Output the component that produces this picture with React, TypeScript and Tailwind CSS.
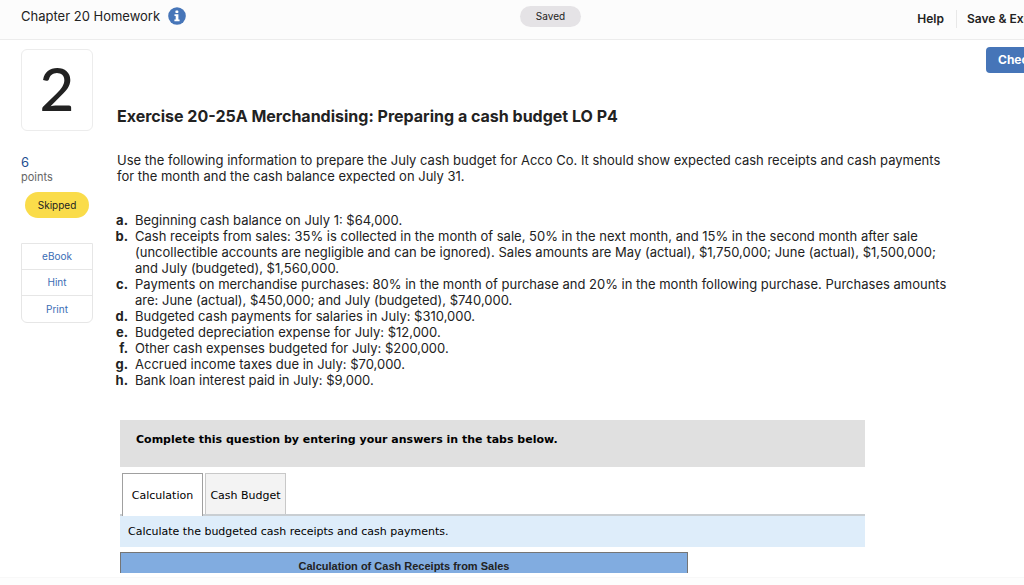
import React, { useState } from "react";

interface IListItem {
  letter: string;
  text: string;
}

const items: IListItem[] = [
  { letter: "a.", text: "Beginning cash balance on July 1: $64,000." },
  {
    letter: "b.",
    text: "Cash receipts from sales: 35% is collected in the month of sale, 50% in the next month, and 15% in the second month after sale (uncollectible accounts are negligible and can be ignored). Sales amounts are May (actual), $1,750,000; June (actual), $1,500,000; and July (budgeted), $1,560,000.",
  },
  {
    letter: "c.",
    text: "Payments on merchandise purchases: 80% in the month of purchase and 20% in the month following purchase. Purchases amounts are: June (actual), $450,000; and July (budgeted), $740,000.",
  },
  { letter: "d.", text: "Budgeted cash payments for salaries in July: $310,000." },
  { letter: "e.", text: "Budgeted depreciation expense for July: $12,000." },
  { letter: "f.", text: "Other cash expenses budgeted for July: $200,000." },
  { letter: "g.", text: "Accrued income taxes due in July: $70,000." },
  { letter: "h.", text: "Bank loan interest paid in July: $9,000." },
];

const tabs = ["Calculation", "Cash Budget"];
const resources = ["eBook", "Hint", "Print"];

const InfoIcon: React.FC = () => (
  <svg viewBox="0 0 18 18" className="h-[18px] w-[18px]" aria-hidden="true">
    <circle cx="9" cy="9" r="8.8" fill="#4675b8" />
    <rect x="7.5" y="3.6" width="2.8" height="2.4" rx="0.6" fill="#fff" />
    <path d="M6.5 7.2h3.9v5.3h1.2v1.7H6.4v-1.7h1.3V8.9H6.5z" fill="#fff" />
  </svg>
);

const Header: React.FC = () => (
  <header className="grid h-10 shrink-0 grid-cols-[520fr_61fr_443fr] overflow-hidden border-b border-[#ececec] bg-[#fcfcfc]">
    <div className="flex items-center gap-2 pb-2 pl-[21px]">
      <h1 className="text-[13px] leading-4">Chapter 20 Homework</h1>
      <button type="button" aria-label="Assignment information">
        <InfoIcon />
      </button>
    </div>
    <span className="mt-1.5 h-[21px] rounded-full bg-[#e5e3e6] text-center text-[10px] leading-5">
      Saved
    </span>
    <nav className="flex items-center justify-end pb-0.5 text-xs font-semibold whitespace-nowrap">
      <button type="button" className="pr-3">Help</button>
      <div className="flex h-[18px] w-[68px] items-center border-l border-[#e8e8e8] pl-2.5">
        <button type="button">Save &amp; Exit</button>
      </div>
    </nav>
  </header>
);

const Sidebar: React.FC = () => (
  <aside className="w-[72px] shrink-0 pt-[9px]">
    <div className="flex h-[82px] items-center justify-center rounded-md border border-[#ececec] pb-1 font-['Lato'] text-[60px] leading-none font-medium">
      2
    </div>
    <p className="mt-[23px] text-[13px] leading-4 text-[#1d4f91]">6</p>
    <p className="text-[11px] leading-[14px] text-[#666]">points</p>
    <div className="mx-1 mt-2 h-[26px] rounded-full bg-[#fadc4a] text-center text-[10px] leading-[26px]">
      Skipped
    </div>
    <div className="mt-[25px] divide-y divide-[#e6e6e6] rounded-b-md border border-[#e6e6e6]">
      {resources.map((name) => (
        <button
          key={name}
          type="button"
          className="block h-[26px] w-full text-[10px] text-[#3a6db5]"
        >
          {name}
        </button>
      ))}
    </div>
  </aside>
);

const AnswerPanel: React.FC = () => {
  const [activeTab, setActiveTab] = useState(0);

  return (
    <section className="mt-8 ml-[3px] max-w-[745px] font-['DejaVu_Sans'] text-black">
      <div className="h-[47px] bg-[#e0e0e0] px-4 pt-3 text-[11px] leading-4 font-bold">
        Complete this question by entering your answers in the tabs below.
      </div>
      <div role="tablist" className="mt-1.5 flex h-[43px] gap-0.5 border-b-2 border-[#c9ced2] pl-0.5">
        {tabs.map((name, index) => (
          <button
            key={name}
            type="button"
            role="tab"
            aria-selected={index === activeTab}
            onClick={() => setActiveTab(index)}
            className={`w-[81px] border border-b-0 text-[11px] whitespace-nowrap ${
              index === activeTab
                ? "h-[43px] border-[#a0a0a0] bg-white pt-0.5"
                : "h-[41px] border-[#c8c8c8] bg-[#f3f3f3] pt-1"
            }`}
          >
            {name}
          </button>
        ))}
      </div>
      <p className="h-[31px] bg-[#deedfa] pl-2 text-[11px] leading-[31px]">
        Calculate the budgeted cash receipts and cash payments.
      </p>
      <table className="mt-[5px] w-full max-w-[568px] border-collapse font-['Liberation_Sans'] text-[11px] text-[#222]">
        <thead>
          <tr>
            <th className="h-[27px] border border-[#757575] bg-[#81ace0] font-bold">
              Calculation of Cash Receipts from Sales
            </th>
          </tr>
        </thead>
      </table>
    </section>
  );
};

const App: React.FC = () => {
  return (
    <div className="flex h-screen flex-col overflow-hidden bg-white font-['Inter',sans-serif] text-[#222]">
      <Header />
      <div className="flex min-h-0 flex-1 overflow-hidden pl-[21px]">
        <Sidebar />
        <main className="min-w-0 flex-1 pt-[66px] pl-6 text-[13px] leading-4">
          <h2 className="text-base leading-5 font-bold">
            Exercise 20-25A Merchandising: Preparing a cash budget LO P4
          </h2>
          <p className="mt-[26px] pr-10">
            Use the following information to prepare the July cash budget for Acco Co. It should show
            expected cash receipts and cash payments for the month and the cash balance expected on
            July 31.
          </p>
          <ol className="mt-7 -ml-1 pr-6">
            {items.map((item) => (
              <li key={item.letter} className="flex gap-[7px]">
                <span className="w-[15px] shrink-0 text-right font-bold">{item.letter}</span>
                <span>{item.text}</span>
              </li>
            ))}
          </ol>
          <AnswerPanel />
        </main>
        <div className="w-[38px] shrink-0 pt-[7px]">
          <button
            type="button"
            className="block h-[26px] rounded-sm bg-[#4675b8] px-3 text-xs font-bold whitespace-nowrap text-white"
          >
            Check
          </button>
        </div>
      </div>
      <footer className="mt-1 h-2 shrink-0 border-t border-[#f8f8f8] bg-[#fdfdfd]" />
    </div>
  );
};

export default App;
